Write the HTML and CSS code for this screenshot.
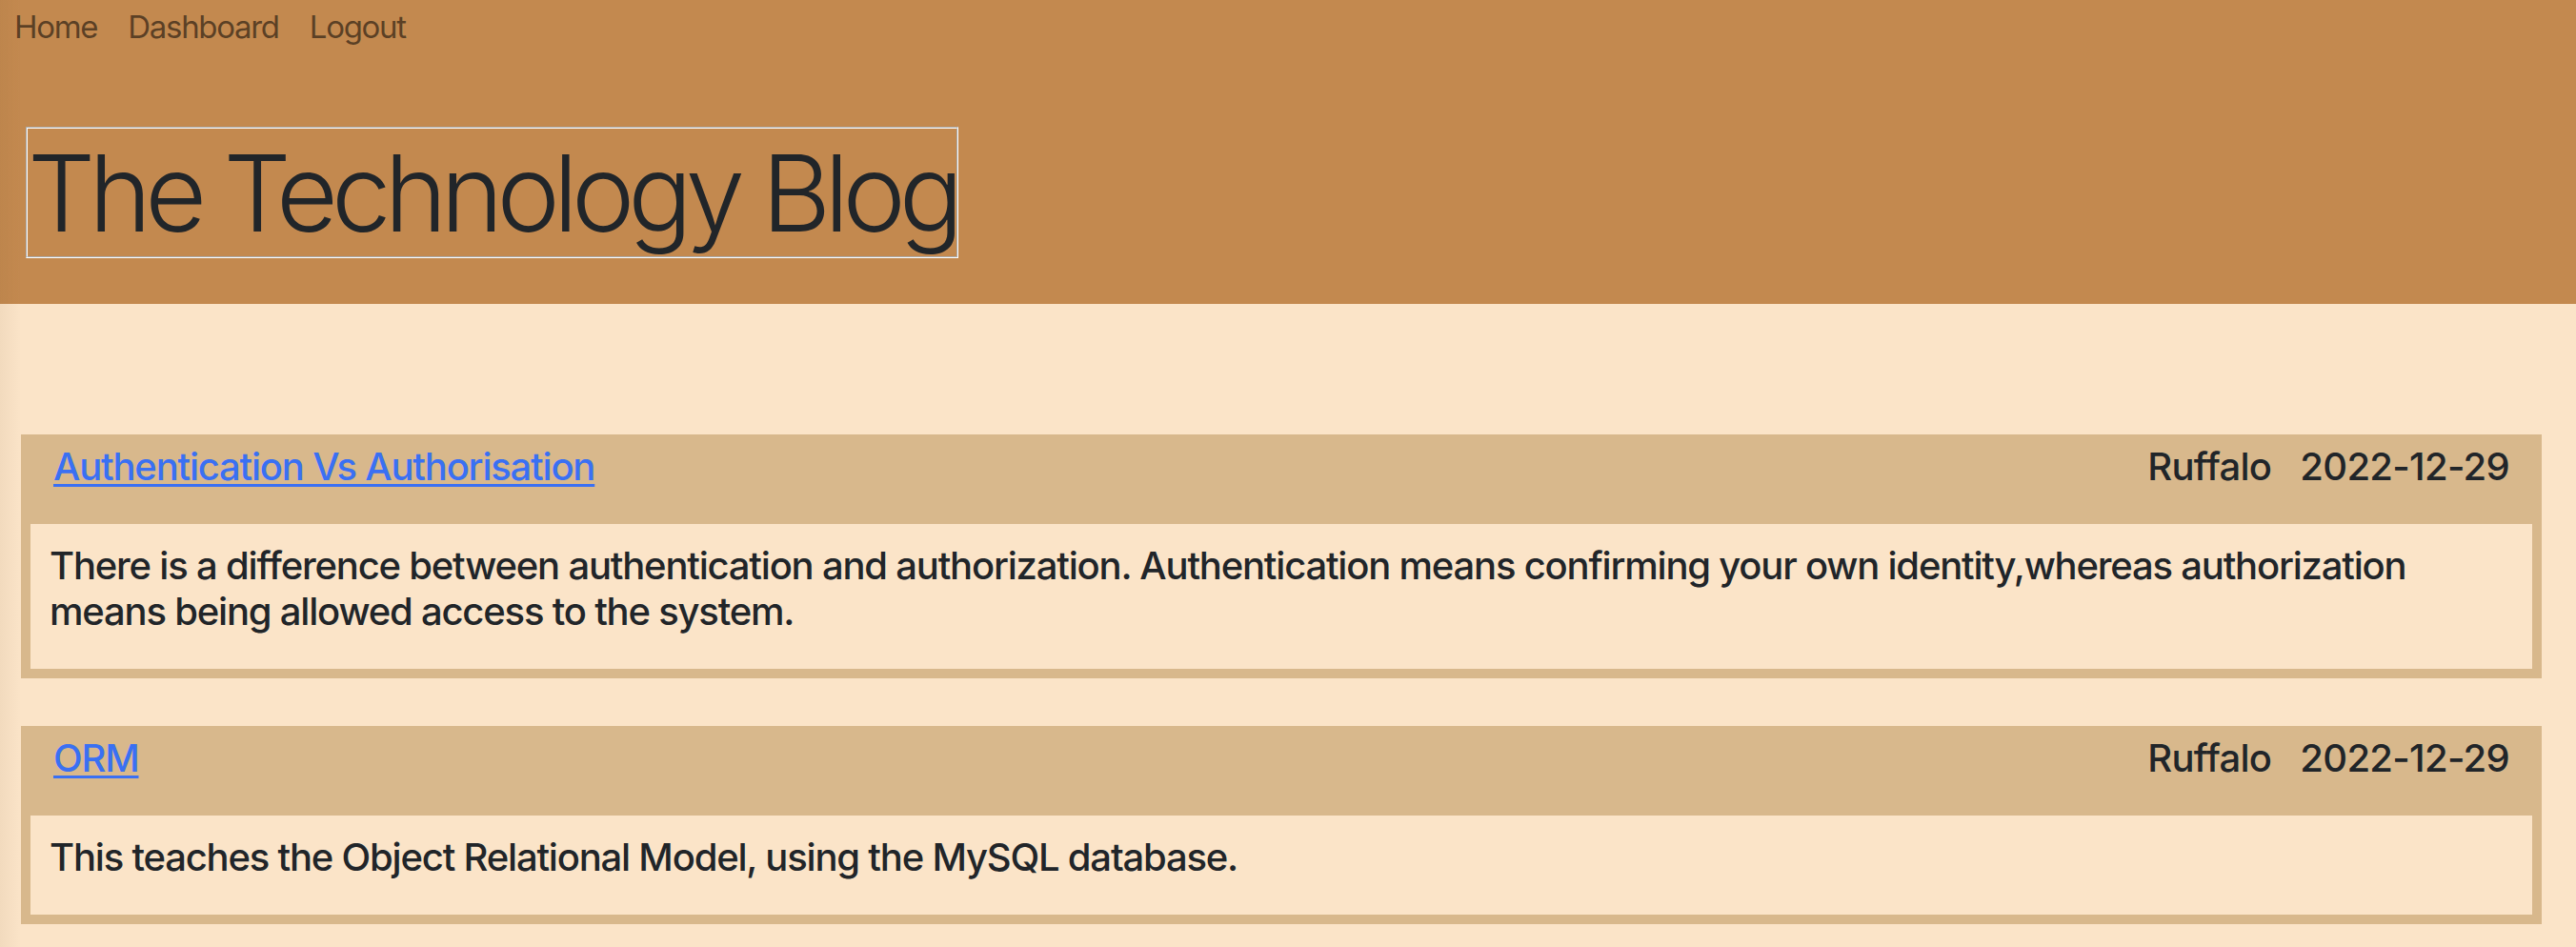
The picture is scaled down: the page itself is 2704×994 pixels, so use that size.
FILE: index.html
```html
<!DOCTYPE html>
<html lang="en">
<head>
<meta charset="utf-8">
<title>The Technology Blog</title>
<link rel="stylesheet" href="styles.css">
</head>
<body>
<header class="site-header">
  <nav class="nav">
    <a class="nav-link" href="#">Home</a>
    <a class="nav-link" href="#">Dashboard</a>
    <a class="nav-link" href="#">Logout</a>
  </nav>
  <h1 class="site-title">The Technology Blog</h1>
</header>
<main class="posts">
  <article class="post">
    <div class="post-head">
      <a class="post-title" href="#">Authentication Vs Authorisation</a>
      <div class="post-meta"><span>Ruffalo</span><span>2022-12-29</span></div>
    </div>
    <div class="post-body">
      <p>There is a difference between authentication and authorization. Authentication means confirming your own identity,whereas authorization means being allowed access to the system.</p>
    </div>
  </article>
  <article class="post">
    <div class="post-head">
      <a class="post-title" href="#">ORM</a>
      <div class="post-meta"><span>Ruffalo</span><span>2022-12-29</span></div>
    </div>
    <div class="post-body">
      <p>This teaches the Object Relational Model, using the MySQL database.</p>
    </div>
  </article>
</main>
</body>
</html>
```

FILE: styles.css
```css
* {
  box-sizing: border-box;
}

html,
body {
  margin: 0;
  padding: 0;
}

body {
  background: linear-gradient(to right, rgba(120, 90, 50, 0.07), rgba(120, 90, 50, 0) 22px), #fbe4c8;
  color: #212529;
  font-family: Inter, "Noto Sans", "Liberation Sans", sans-serif;
  min-height: 994px;
}

.site-header {
  background: linear-gradient(to right, rgba(90, 60, 30, 0.05), rgba(90, 60, 30, 0) 22px), #c3894f;
  display: flex;
  flex-direction: column;
  align-items: flex-start;
  padding: 4px 0 48px 15px;
}

.nav {
  display: flex;
  gap: 32px;
  font-size: 33px;
  line-height: 48px;
  letter-spacing: -1.3px;
}

.nav-link {
  color: rgba(0, 0, 0, 0.55);
  text-decoration: none;
}

.site-title {
  margin: 81px 0 0 12px;
  font-size: 112px;
  font-weight: 300;
  line-height: 1.2;
  letter-spacing: -7px;
  border: 2px groove #ffffff;
  padding: 0;
}

.posts {
  display: flex;
  flex-direction: column;
  gap: 50px;
  padding: 137px 36px 0 22px;
}

.post {
  background: #d8b88c;
  padding: 10px;
}

.post-head {
  display: flex;
  justify-content: space-between;
  align-items: flex-start;
  padding: 0 24px 36px;
  font-size: 40px;
  line-height: 48px;
  font-weight: 500;
  letter-spacing: -1.2px;
}

.post-title {
  color: #3a70f3;
  text-decoration: underline;
  text-decoration-thickness: 3px;
  text-underline-offset: 4px;
}

.post-meta {
  display: flex;
  gap: 30px;
  letter-spacing: -0.7px;
}

.post-body {
  background: #fbe4c8;
  padding: 20px 20px 36px;
  font-size: 40px;
  line-height: 48px;
  font-weight: 500;
  letter-spacing: -1.2px;
}

.post-body p {
  margin: 0;
}
```
